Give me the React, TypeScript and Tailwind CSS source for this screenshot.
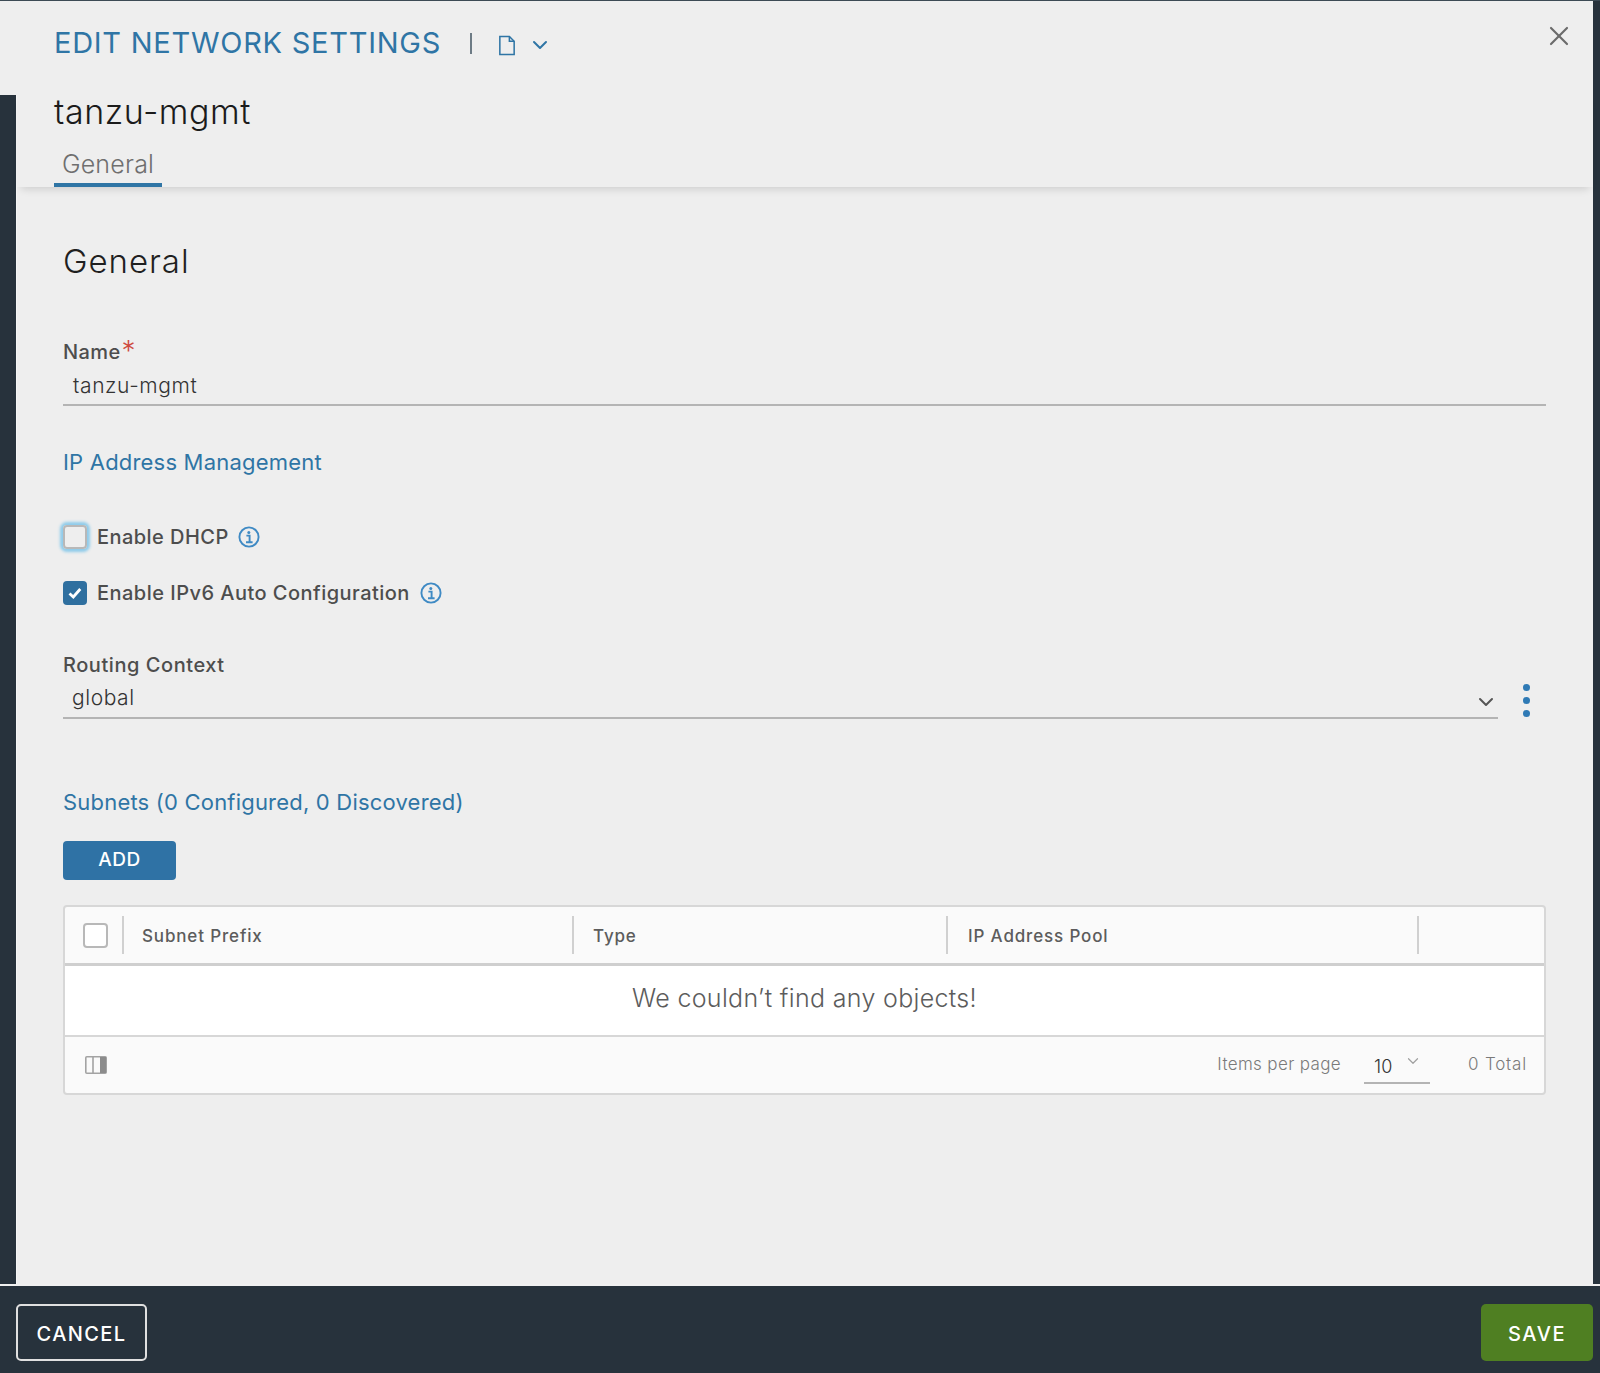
import { ChevronDown, X } from "lucide-react";

const InfoIcon = () => (
  <svg viewBox="0 0 22 22" className="w-[22px] h-[22px] text-[#3f8ac4]" fill="none" stroke="currentColor">
    <circle cx="11" cy="11" r="9.6" strokeWidth="1.9" />
    <circle cx="10.8" cy="6.4" r="1.5" fill="currentColor" stroke="none" />
    <path d="M8.4 9.6h3.2v6.4M8 16.2h6.6" strokeWidth="1.9" />
  </svg>
);

const FileIcon = () => (
  <svg viewBox="0 0 18 22" className="w-[18px] h-[21px] text-[#2f75a5]" fill="none" stroke="currentColor" strokeWidth="1.6">
    <path d="M1.5 1.5h10l5 5v14h-15z" />
    <path d="M11.5 1.5v5h5" />
  </svg>
);

const ColumnsIcon = () => (
  <svg viewBox="0 0 22 18" className="w-[22px] h-[18px]">
    <rect x="0.8" y="0.8" width="20.4" height="16.4" rx="1" fill="#fafafa" stroke="#a3a3a3" strokeWidth="1.6" />
    <path d="M8 1v16" stroke="#a3a3a3" strokeWidth="1.6" />
    <rect x="15" y="1" width="6" height="16" fill="#8c8c8c" />
  </svg>
);

const HeaderCell = ({ label, className }: { label: string; className: string }) => (
  <div className={`h-[38px] pt-[3px] border-l-2 border-[#d0d0d0] flex items-center text-[17px] font-medium text-[#5c5c5c] tracking-[0.85px] ${className}`}>
    {label}
  </div>
);

const App = () => {
  return (
    <div className="w-[1600px] h-[1373px] flex flex-col bg-[#27323c] border-t border-[#3c4a54] font-['Inter',sans-serif] overflow-hidden">
      <div className="flex-1 w-[1593px] flex flex-col min-h-0">
        {/* top of the header runs over the dark rail */}
        <div className="h-[94px] shrink-0 bg-[#eeeeee] relative pl-[54px] pt-[22px] flex items-start">
          <h1 className="text-[29px] leading-[40px] font-normal tracking-[0.74px] text-[#2f75a5] whitespace-nowrap">
            EDIT NETWORK SETTINGS
          </h1>
          <div className="ml-[29px] mt-[10px] h-[21px] w-[2px] bg-[#6d7b85]" />
          <div className="ml-[26px] mt-[12px]">
            <FileIcon />
          </div>
          <ChevronDown className="ml-[12px] mt-[10px] w-[24px] h-[24px] text-[#2f75a5]" strokeWidth={2} />
          <X className="absolute left-[1543px] top-[19px] w-[32px] h-[32px] text-[#6b6b6b]" strokeWidth={1.6} />
        </div>

        <div className="flex-1 flex min-h-0">
          <div className="w-[17px] shrink-0 bg-[#27323c] border-r border-[#f5f5f5]" />
          <div className="flex-1 flex flex-col bg-[#eeeeee] min-w-0">
            <div className="h-[92px] shrink-0 pl-[37px] relative shadow-[0_6px_8px_-4px_rgba(0,0,0,0.14)]">
              <div className="text-[34px] leading-[34px] font-light tracking-[0.55px] text-[#1b1b1b]">tanzu-mgmt</div>
              <div className="mt-[18px] w-[108px] h-[40px] border-b-4 border-[#2f75a5] text-center text-[25px] leading-[34px] font-light tracking-[0.2px] text-[#6f6f6f]">
                General
              </div>
            </div>

            <div className="flex-1 pl-[46px] pr-[47px] pt-[52px]">
              <h2 className="text-[33px] leading-[44px] font-light tracking-[0.95px] text-[#1f1f1f]">General</h2>

              <div className="mt-[53px] flex items-end h-[29px] text-[20px] leading-[26px] font-medium tracking-[0.4px] text-[#4d4d4d]">
                Name
                <span className="text-[#cf4a3f] text-[28px] leading-[26px] font-light self-start mt-[2px] ml-[1px]">*</span>
              </div>
              <div className="h-[41px] border-b-2 border-[#b4b4b4] pl-[10px] text-[21px] leading-[42px] font-light tracking-[0.6px] text-[#333333]">
                tanzu-mgmt
              </div>

              <div className="mt-[41px] text-[22px] leading-[30px] tracking-[0.2px] text-[#2f75a5]">IP Address Management</div>

              <div className="mt-[48px] flex items-center h-[24px]">
                <div className="w-[24px] h-[24px] rounded-[4px] border-2 border-[#b8b8b8] shadow-[0_0_3px_3px_#8ecbea]" />
                <span className="ml-[10px] text-[20px] font-medium tracking-[0.45px] text-[#4d4d4d]">Enable DHCP</span>
                <span className="ml-[9px]"><InfoIcon /></span>
              </div>

              <div className="mt-[32px] flex items-center h-[24px]">
                <div className="w-[24px] h-[24px] rounded-[4px] bg-[#2f6f9f] flex items-center justify-center">
                  <svg viewBox="0 0 16 16" className="w-[16px] h-[16px]" fill="none" stroke="#ffffff" strokeWidth="2.8">
                    <path d="M2.5 8.5l3.8 3.5 7-8" />
                  </svg>
                </div>
                <span className="ml-[10px] text-[20px] font-medium tracking-[0.47px] text-[#4d4d4d]">Enable IPv6 Auto Configuration</span>
                <span className="ml-[10px]"><InfoIcon /></span>
              </div>

              <div className="mt-[47px] text-[20px] leading-[26px] font-medium tracking-[0.55px] text-[#4d4d4d]">Routing Context</div>
              <div className="flex items-start mr-[16px]">
                <div className="flex-1 h-[41px] border-b-2 border-[#b4b4b4] pl-[9px] flex items-start justify-between text-[21px] leading-[40px] font-light tracking-[0.55px] text-[#333333]">
                  global
                  <ChevronDown className="mt-[12px] w-[24px] h-[24px] text-[#555555]" strokeWidth={2} />
                </div>
                <div className="ml-[25px] mt-[6px] flex flex-col gap-[6px]">
                  <span className="w-[7px] h-[7px] rounded-full bg-[#2f7ab5]" />
                  <span className="w-[7px] h-[7px] rounded-full bg-[#2f7ab5]" />
                  <span className="w-[7px] h-[7px] rounded-full bg-[#2f7ab5]" />
                </div>
              </div>

              <div className="mt-[68px] text-[22px] leading-[30px] tracking-[0.2px] text-[#2f75a5]">
                Subnets (0 Configured, 0 Discovered)
              </div>

              <button className="mt-[24px] block w-[113px] h-[39px] rounded-[4px] bg-[#2f72a5] text-white text-[19px] font-medium tracking-[0.6px]">
                ADD
              </button>

              <div className="mt-[25px] h-[190px] border-2 border-[#d7d7d7] rounded-[4px] bg-[#fafafa] flex flex-col">
                <div className="h-[59px] shrink-0 border-b-[3px] border-[#cfcfcf] flex items-center pl-[18px]">
                  <div className="w-[25px] h-[25px] rounded-[4px] border-2 border-[#b8b8b8] bg-white" />
                  <HeaderCell label="Subnet Prefix" className="ml-[14px] pl-[18px] w-[450px]" />
                  <HeaderCell label="Type" className="pl-[19px] w-[374px]" />
                  <HeaderCell label="IP Address Pool" className="pl-[20px] w-[471px]" />
                  <div className="h-[38px] border-l-2 border-[#d0d0d0]" />
                </div>
                <div className="h-[71px] shrink-0 pb-[3px] bg-white border-b-2 border-[#d7d7d7] flex items-center justify-center text-[25px] font-light tracking-[0.33px] text-[#5c5c5c]">
                  We couldn’t find any objects!
                </div>
                <div className="flex-1 flex items-center pl-[20px] pr-[17px] text-[#7a7a7a] text-[17px] font-light">
                  <ColumnsIcon />
                  <span className="ml-auto tracking-[0.36px]">Items per page</span>
                  <div className="ml-[23px] w-[66px] h-[28px] mt-[10px] border-b-2 border-[#b4b4b4] flex items-start pl-[10px] relative">
                    <span className="text-[#333333] text-[18px] leading-[21px]">10</span>
                    <ChevronDown className="absolute left-[40px] -top-[4px] w-[18px] h-[18px] text-[#a0a0a0]" strokeWidth={1.6} />
                  </div>
                  <span className="ml-[38px] tracking-[0.8px]">0 Total</span>
                </div>
              </div>
            </div>
          </div>
        </div>
      </div>

      <div className="h-[89px] shrink-0 border-t-2 border-[#f0f0f0] bg-[#27323c] flex items-start justify-between pt-[18px] pl-[16px] pr-[7px]">
        <button className="w-[131px] h-[57px] pt-[2px] rounded-[5px] border-2 border-[#e0e0e0] text-white text-[20px] font-medium tracking-[1.4px]">
          CANCEL
        </button>
        <button className="w-[112px] h-[57px] pt-[2px] rounded-[5px] bg-[#4f7f22] text-white text-[20px] font-medium tracking-[1.6px]">
          SAVE
        </button>
      </div>
    </div>
  );
};

export default App;
